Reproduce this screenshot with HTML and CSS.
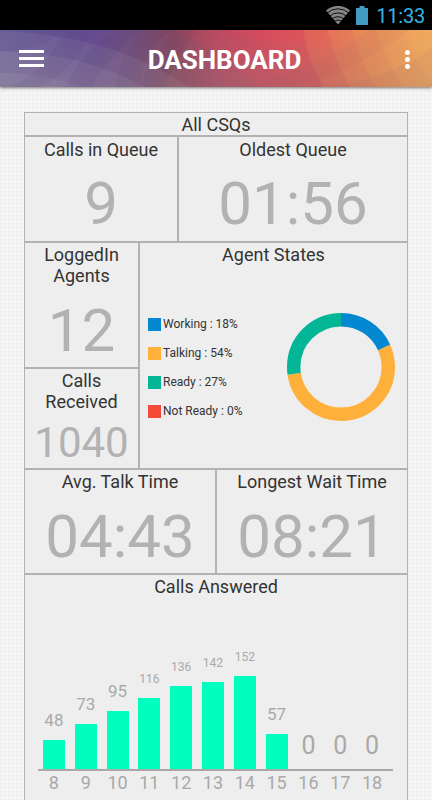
FILE: index.html
```html
<!DOCTYPE html>
<html lang="en">
<head>
    <meta charset="UTF-8">
    <title>Dashboard</title>
    <link rel="stylesheet" href="styles.css">
</head>
<body>
<div class="statusBar">
    <svg class="wifi" width="24" height="19" viewBox="0 0 24 19">
        <path d="M0 4.5 A18 18 0 0 1 24 4.5 L12 18.5 Z" fill="#858585"/>
        <g fill="none" stroke="#000" stroke-width=".9">
            <path d="M1 7.2 A16 16 0 0 1 23 7.2"/>
            <path d="M3.5 10.2 A12.5 12.5 0 0 1 20.5 10.2"/>
            <path d="M6 13 A9 9 0 0 1 18 13"/>
            <path d="M8 15.6 A6 6 0 0 1 16 15.6"/>
        </g>
    </svg>
    <svg class="battery" width="12" height="19" viewBox="0 0 12 19">
        <path d="M0 2 H3.5 V0 H8.5 V2 H12 V19 H0 Z" fill="#419bc2"/>
    </svg>
    <span class="clock">11:33</span>
</div>
<div class="header">
    <svg class="headerBg" width="432" height="57" viewBox="0 0 432 57">
        <defs>
            <linearGradient id="sky" x1="0" y1="0" x2="1" y2="0">
                <stop offset="0" stop-color="#675e97"/>
                <stop offset=".12" stop-color="#655393"/>
                <stop offset=".22" stop-color="#644a90"/>
                <stop offset=".3" stop-color="#704d80"/>
                <stop offset=".4" stop-color="#87485f"/>
                <stop offset=".5" stop-color="#b54a62"/>
                <stop offset=".62" stop-color="#d54f5e"/>
                <stop offset=".75" stop-color="#df5d57"/>
                <stop offset=".87" stop-color="#e07f58"/>
                <stop offset="1" stop-color="#e2ab66"/>
            </linearGradient>
            <linearGradient id="fade" x1="0" y1="0" x2="0" y2="1">
                <stop offset="0" stop-color="#857482" stop-opacity="0"/>
                <stop offset="1" stop-color="#857478" stop-opacity=".36"/>
            </linearGradient>
        </defs>
        <rect width="432" height="57" fill="url(#sky)"/>
        <rect width="432" height="57" fill="url(#fade)"/>
        <g fill="#fff" fill-opacity=".06">
            <path d="M0 1 Q110 4 189 57 H0 Z"/>
            <path d="M0 21 Q80 22 145 57 H0 Z"/>
            <path d="M0 43 Q45 42 80 57 H0 Z"/>
        </g>
        <g fill="#3c2e60" fill-opacity=".07">
            <path d="M62 0 Q50 18 0 22 V0 Z"/>
            <path d="M62 0 Q50 40 10 57 H40 Q78 38 90 0 Z"/>
            <path d="M118 0 Q78 24 66 57 H92 Q112 20 145 0 Z"/>
            <path d="M145 0 Q120 22 115 57 H140 Q142 20 172 0 Z"/>
            <path d="M172 0 Q148 35 140 57 H166 Q175 25 198 0 Z"/>
        </g>
        <g fill="#e8445c" fill-opacity=".1">
            <path d="M172 0 Q225 20 258 57 H432 V0 Z"/>
            <path d="M225 0 Q250 12 305 12 V0 Z"/>
        </g>
        <g fill="#ffbc5e" fill-opacity=".13">
            <path d="M303 0 Q308 30 323 57 H432 V0 Z"/>
            <path d="M328 0 Q334 30 350 57 H432 V0 Z"/>
            <path d="M352 0 Q359 30 376 57 H432 V0 Z"/>
            <path d="M376 0 Q386 32 404 57 H432 V0 Z"/>
            <path d="M401 0 Q411 27 432 52 V0 Z"/>
        </g>
        <g fill="#9a5a60" fill-opacity=".08">
            <path d="M215 57 Q300 52 370 0 H410 Q350 45 290 57 Z"/>
            <path d="M330 57 Q400 45 432 17 V57 Z"/>
        </g>
    </svg>
    <div class="menuBtn"><i></i><i></i><i></i></div>
    <h1 class="title">DASHBOARD</h1>
    <div class="moreBtn"><i></i><i></i><i></i></div>
</div>
<div class="page">
    <div class="board">
        <div class="row allRow">
            <div class="cell"><h2>All CSQs</h2></div>
        </div>
        <div class="row queueRow">
            <div class="cell"><h2>Calls in Queue</h2><p class="num">9</p></div>
            <div class="cell"><h2>Oldest Queue</h2><p class="num">01:56</p></div>
        </div>
        <div class="row agentRow">
            <div class="agentSide">
                <div class="cell"><h2>LoggedIn<br>Agents</h2><p class="num">12</p></div>
                <div class="cell"><h2>Calls<br>Received</h2><p class="num small">1040</p></div>
            </div>
            <div class="cell states">
                <h2>Agent States</h2>
                <div class="statesBody">
                    <ul class="legend">
                        <li><i class="working"></i>Working : 18%</li>
                        <li><i class="talking"></i>Talking : 54%</li>
                        <li><i class="ready"></i>Ready : 27%</li>
                        <li><i class="notReady"></i>Not Ready : 0%</li>
                    </ul>
                    <svg class="donut" width="108" height="108" viewBox="0 0 108 108">
                        <g fill="none" stroke-width="13.4" transform="rotate(-90 54 54)">
                            <circle cx="54" cy="54" r="47.3" pathLength="99" stroke="#ffb03b" stroke-dasharray="54 45" stroke-dashoffset="-18"/>
                            <circle cx="54" cy="54" r="47.3" pathLength="99" stroke="#0288d1" stroke-dasharray="18 81"/>
                            <circle cx="54" cy="54" r="47.3" pathLength="99" stroke="#02b696" stroke-dasharray="27 72" stroke-dashoffset="-72"/>
                        </g>
                    </svg>
                </div>
            </div>
        </div>
        <div class="row timeRow">
            <div class="cell"><h2>Avg. Talk Time</h2><p class="num">04:43</p></div>
            <div class="cell"><h2>Longest Wait Time</h2><p class="num">08:21</p></div>
        </div>
        <div class="row answeredRow">
            <div class="cell">
                <h2>Calls Answered</h2>
                <div class="chart">
                    <div class="col"><span class="val">48</span><div class="bar" style="height: 29px"></div></div>
                    <div class="col"><span class="val">73</span><div class="bar" style="height: 45px"></div></div>
                    <div class="col"><span class="val">95</span><div class="bar" style="height: 58px"></div></div>
                    <div class="col"><span class="val mini">116</span><div class="bar" style="height: 71px"></div></div>
                    <div class="col"><span class="val mini">136</span><div class="bar" style="height: 83px"></div></div>
                    <div class="col"><span class="val mini">142</span><div class="bar" style="height: 87px"></div></div>
                    <div class="col"><span class="val mini">152</span><div class="bar" style="height: 93px"></div></div>
                    <div class="col"><span class="val">57</span><div class="bar" style="height: 35px"></div></div>
                    <div class="col"><span class="val zero">0</span></div>
                    <div class="col"><span class="val zero">0</span></div>
                    <div class="col"><span class="val zero">0</span></div>
                </div>
                <div class="axis">
                    <span>8</span><span>9</span><span>10</span><span>11</span><span>12</span><span>13</span><span>14</span><span>15</span><span>16</span><span>17</span><span>18</span>
                </div>
            </div>
        </div>
    </div>
</div>
</body>
</html>
```
FILE: styles.css
```css
* {
    margin: 0;
    padding: 0;
    box-sizing: border-box;
}

body {
    height: 800px;
    overflow: hidden;
    background-color: #f4f4f4;
    font-family: Roboto, "Liberation Sans", sans-serif;
    color: #333;
}

ul {
    list-style: none;
}

/* status bar */
.statusBar {
    height: 30px;
    padding-right: 7px;
    background-color: #000;
    display: flex;
    align-items: center;
    justify-content: flex-end;
}

.battery {
    margin: 0 8px 0 6px;
}

.clock {
    font-size: 20px;
    line-height: 30px;
    letter-spacing: -0.2px;
    color: #33b5e5;
    padding-top: 2px;
}

/* header */
.header {
    height: 57px;
    padding: 0 22px 0 19px;
    position: relative;
    display: flex;
    align-items: center;
    justify-content: space-between;
    box-shadow: 0 1px 3px rgba(0, 0, 0, .5);
}

.headerBg {
    position: absolute;
    top: 0;
    left: 0;
}

.menuBtn, .title, .moreBtn {
    position: relative;
}

.menuBtn {
    width: 25px;
}

.menuBtn i {
    display: block;
    height: 2.5px;
    margin: 4.5px 0;
    background-color: #fff;
}

.title {
    font-size: 26px;
    font-weight: 700;
    color: #fff;
    padding-top: 3px;
}

.moreBtn i {
    display: block;
    width: 5px;
    height: 5px;
    margin: 2px 0;
    border-radius: 50%;
    background-color: #fff;
}

.moreBtn {
    padding-top: 1px;
}

/* board */
.page {
    height: 713px;
    padding: 25px 24px 0;
    background-color: #f5f5f5;
    background-image: repeating-linear-gradient(0deg, rgba(0, 0, 0, .014) 0 1px, transparent 1px 4px), repeating-linear-gradient(90deg, rgba(0, 0, 0, .014) 0 1px, transparent 1px 4px);
}

.board {
    width: 384px;
}

.row {
    display: flex;
}

.cell {
    flex: 1;
    border: 1px solid #b2b2b2;
    background-color: #eee;
    text-align: center;
}

h2 {
    font-size: 18px;
    font-weight: 400;
    line-height: 21px;
    padding-top: 1px;
}

.num {
    font-size: 60px;
    line-height: 61px;
    color: #b2b2b2;
    padding-top: 14px;
}

.num.small {
    font-size: 42px;
    line-height: 43px;
    padding-top: 9px;
}

.allRow {
    height: 24px;
}

.queueRow {
    height: 106px;
}

.queueRow h2 {
    padding-top: 2px;
}

.queueRow .num {
    padding-top: 13px;
}

.queueRow .cell:first-child {
    flex: 0 0 154px;
}

.agentRow {
    height: 227px;
}

.agentSide {
    width: 115px;
    display: flex;
    flex-direction: column;
}

.agentSide .cell:first-child {
    flex: 0 0 126px;
}

.statesBody {
    display: flex;
    justify-content: space-between;
    padding: 48px 12px 0 8px;
}

.legend {
    padding-top: 2px;
}

.legend li {
    height: 18px;
    margin-bottom: 11px;
    display: flex;
    align-items: center;
    font-size: 12px;
    line-height: 18px;
}

.legend i {
    width: 13px;
    height: 13px;
    margin-right: 2px;
}

.working {
    background-color: #0288d1;
}

.talking {
    background-color: #ffb03b;
}

.ready {
    background-color: #02b696;
}

.notReady {
    background-color: #f44a38;
}

.timeRow {
    height: 105px;
}

.answeredRow {
    height: 240px;
}

/* chart */
.chart {
    height: 174px;
    width: 355px;
    margin-left: 13px;
    padding-right: 5px;
    border-bottom: 2px solid #a9a9a9;
    display: flex;
}

.col {
    flex: 1;
    display: flex;
    flex-direction: column;
    justify-content: flex-end;
    align-items: center;
}

.bar {
    width: 22px;
    background-color: #00ffbf;
}

.val {
    font-size: 17px;
    line-height: 1;
    color: #a9a9a9;
    margin-bottom: 11px;
}

.val.mini {
    font-size: 12px;
    margin-bottom: 13px;
}

.val.zero {
    font-size: 25px;
}

.axis {
    width: 355px;
    margin-left: 13px;
    padding: 2px 5px 0 0;
    display: flex;
}

.axis span {
    flex: 1;
    font-size: 18px;
    line-height: 20px;
    color: #a9a9a9;
}
```
